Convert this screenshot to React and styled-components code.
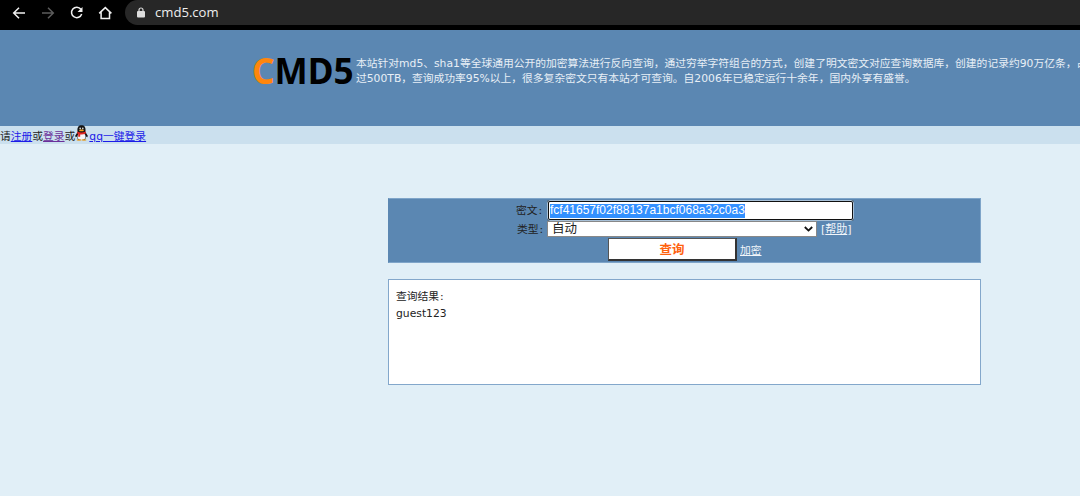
import React from "react";
import styled, { createGlobalStyle } from "styled-components";

const Global = createGlobalStyle`
  * { box-sizing: border-box; }
  body {
    margin: 0;
    background: #e1eff7;
    font-family: "DejaVu Sans", "Noto Sans CJK SC", sans-serif;
    font-size: 10.78px;
    color: #222;
    overflow: hidden;
  }
`;

const Page = styled.div`
  width: 100%;
  height: 496px;
  overflow: hidden;
`;

const BrowserBar = styled.div`
  height: 30px;
  background: #000;
  display: flex;
  align-items: flex-start;
  padding-left: 11px;
`;

const NavIcon = styled.svg`
  width: 16px;
  height: 16px;
  margin: 5px 13px 0 0;
  flex: none;
  fill: none;
  stroke: ${(p) => (p.$dim ? "#5c5c5c" : "#f1f1f1")};
  stroke-width: 1.5;
`;

const Omnibox = styled.div`
  flex: 1;
  height: 25px;
  margin-left: -2px;
  background: #272727;
  border-radius: 13px 0 0 13px;
  display: flex;
  align-items: center;
  padding-left: 12px;
  color: #eee;
  font: 13.1px/25px "Open Sans", sans-serif;
`;

const Lock = styled.svg`
  width: 8px;
  height: 11px;
  margin-right: 10px;
`;

const Header = styled.header`
  height: 96px;
  background: #5b87b2;
  display: flex;
  padding: 23px 0 0 252px;
  color: #e8eff6;
`;

const Logo = styled.div`
  width: 104px;
  flex: none;
  font: bold 35.2px/34px "Noto Sans", "Open Sans", sans-serif;
  color: #000;
`;

const Orange = styled.span`
  color: #ff860d;
`;

const Intro = styled.div`
  flex: none;
  padding-top: 3px;
  line-height: 15px;
  white-space: nowrap;
`;

const LoginBar = styled.div`
  height: 18px;
  background: #cbe0ee;
  display: flex;
  line-height: 21px;
  white-space: nowrap;
`;

const Link = styled.a`
  color: ${(p) => p.$color || "#1c1ce8"};
  text-decoration: underline;
`;

const Penguin = styled.svg`
  width: 13px;
  height: 16px;
  margin: -1px 1px 0 0;
`;

const Main = styled.main`
  width: 593px;
  margin: 54px 0 0 388px;
`;

const Form = styled.div`
  height: 65px;
  background: #5b87b2;
  border: 1px solid #7fa5c9;
  border-left-color: #5b87b2;
  padding-top: 1px;
`;

const Row = styled.div`
  display: flex;
  height: ${(p) => p.$h}px;
  padding-left: ${(p) => p.$left}px;
  align-items: center;
  white-space: nowrap;
`;

const Label = styled.span`
  width: ${(p) => p.$w}px;
  padding-bottom: 3px;
  flex: none;
`;

const Colon = styled.span`
  margin-left: 1px;
`;

const HashField = styled.div`
  width: 307px;
  height: 21px;
  background: #fff;
  border: 2px solid #101010;
  border-radius: 3px;
  outline: 1px solid #a7c0d7;
  outline-offset: -1px;
  padding: 2px 0 0 1px;
  font: 12px/13px "Liberation Sans", sans-serif;
`;

const Selected = styled.span`
  display: inline-block;
  background: #3390ff;
  color: #fff;
  height: 14px;
`;

const TypeSelect = styled.div`
  width: 270px;
  height: 16px;
  background: #fff;
  border: 1px solid #888;
  display: flex;
  align-items: center;
  justify-content: space-between;
  padding: 0 3px 0 4px;
  margin: 0 4px 1px 0;
  font-size: 12.5px;
  line-height: 14px;
`;

const Chevron = styled.svg`
  width: 9px;
  height: 6px;
`;

const Help = styled.span`
  color: #f2f6fa;
  font-size: 11px;
  padding-bottom: 3px;
`;

const EncryptLink = styled(Link)`
  padding-bottom: 2px;
`;

const Submit = styled.button`
  width: 129px;
  height: 23px;
  margin: 0 3px 1px 0;
  padding: 0;
  background: #fff;
  border: 1px solid #333;
  border-width: 1px 2px 2px 1px;
  border-color: #555 #333 #333 #555;
  color: #ff620d;
  font: bold 12.5px/18px "Noto Sans CJK SC", sans-serif;
`;

const Result = styled.div`
  height: 106px;
  margin-top: 16px;
  background: #fff;
  border: 1px solid #83a7cb;
  padding: 8px 7px;
  line-height: 17px;
`;

export default function App() {
  return (
    <Page>
      <Global />
      <BrowserBar>
        <NavIcon viewBox="0 0 16 16"><path d="M14 8H2.7M8 2.7 2.7 8 8 13.3" /></NavIcon>
        <NavIcon $dim viewBox="0 0 16 16"><path d="M2 8h11.3M8 2.7 13.3 8 8 13.3" /></NavIcon>
        <NavIcon viewBox="0 0 16 16">
          <path d="M11.9 4.3A5.2 5.2 0 1 0 12.7 9" />
          <path d="M13.5 2v5h-5z" fill="#f1f1f1" stroke="none" />
        </NavIcon>
        <NavIcon viewBox="0 0 16 16"><path d="M1.2 8.4 7.3 2.6l6.1 5.800M3.100 7.200v6.300h8.400V7.200" /></NavIcon>
        <Omnibox>
          <Lock viewBox="0 0 8 11">
            <rect y="4" width="8" height="6.6" rx="1" fill="#ddd" />
            <path d="M2 4.5V3a2 2 0 0 1 4 0v1.5" fill="none" stroke="#ddd" strokeWidth="1.2" />
          </Lock>
          cmd5.com
        </Omnibox>
      </BrowserBar>
      <Header>
        <Logo><Orange>C</Orange>MD5</Logo>
        <Intro>
          本站针对md5、sha1等全球通用公开的加密算法进行反向查询，通过穷举字符组合的方式，创建了明文密文对应查询数据库，创建的记录约90万亿条，占
          <br />
          过500TB，查询成功率95%以上，很多复杂密文只有本站才可查询。自2006年已稳定运行十余年，国内外享有盛誉。
        </Intro>
      </Header>
      <LoginBar>
        <span>请</span>
        <Link>注册</Link>
        <span>或</span>
        <Link $color="#6a2f9a">登录</Link>
        <span>或</span>
        <Penguin viewBox="0 0 13 16">
          <path d="M2.6 7C1.8 2 3.8.3 6.5.3S11.2 2 10.4 7l2.4 3.8-.5 1.4-1.3-.8-1 3.5H3l-1-3.5-1.3.8-.5-1.4z" fill="#151515" />
          <ellipse cx="6.5" cy="11.6" rx="4" ry="3.5" fill="#f5f5f5" />
          <ellipse cx="5.2" cy="3.5" rx=".8" ry="1.1" fill="#ddd" />
          <ellipse cx="7.8" cy="3.5" rx=".8" ry="1.1" fill="#ddd" />
          <ellipse cx="6.5" cy="5.4" rx="2.4" ry=".9" fill="#f5a51d" />
          <path d="M2.2 6.5q4.3 2 8.6 0v2q-3 1.3-5.6.9v2.3H3.2V8.9l-1-.5z" fill="#e32620" />
          <ellipse cx="4" cy="15" rx="2.5" ry=".8" fill="#e89a1d" />
          <ellipse cx="9" cy="15" rx="2.5" ry=".8" fill="#e89a1d" />
        </Penguin>
        <Link>qq一键登录</Link>
      </LoginBar>
      <Main>
        <Form>
          <Row $h={21} $left={127}>
            <Label $w={31}>密文<Colon>:</Colon></Label>
            <HashField><Selected>fcf41657f02f88137a1bcf068a32c0a3</Selected></HashField>
          </Row>
          <Row $h={17} $left={128}>
            <Label $w={30}>类型<Colon>:</Colon></Label>
            <TypeSelect>
              自动
              <Chevron viewBox="0 0 9 6">
                <path d="M.8 1l3.7 3.6L8.2 1" fill="none" stroke="#111" strokeWidth="1.8" />
              </Chevron>
            </TypeSelect>
            <Help>[<Link $color="#f2f6fa">帮助</Link>]</Help>
          </Row>
          <Row $h={23} $left={219}>
            <Submit>查询</Submit>
            <EncryptLink $color="#f2f6fa">加密</EncryptLink>
          </Row>
        </Form>
        <Result>
          <div>查询结果<Colon>:</Colon></div>
          <div>guest123</div>
        </Result>
      </Main>
    </Page>
  );
}
